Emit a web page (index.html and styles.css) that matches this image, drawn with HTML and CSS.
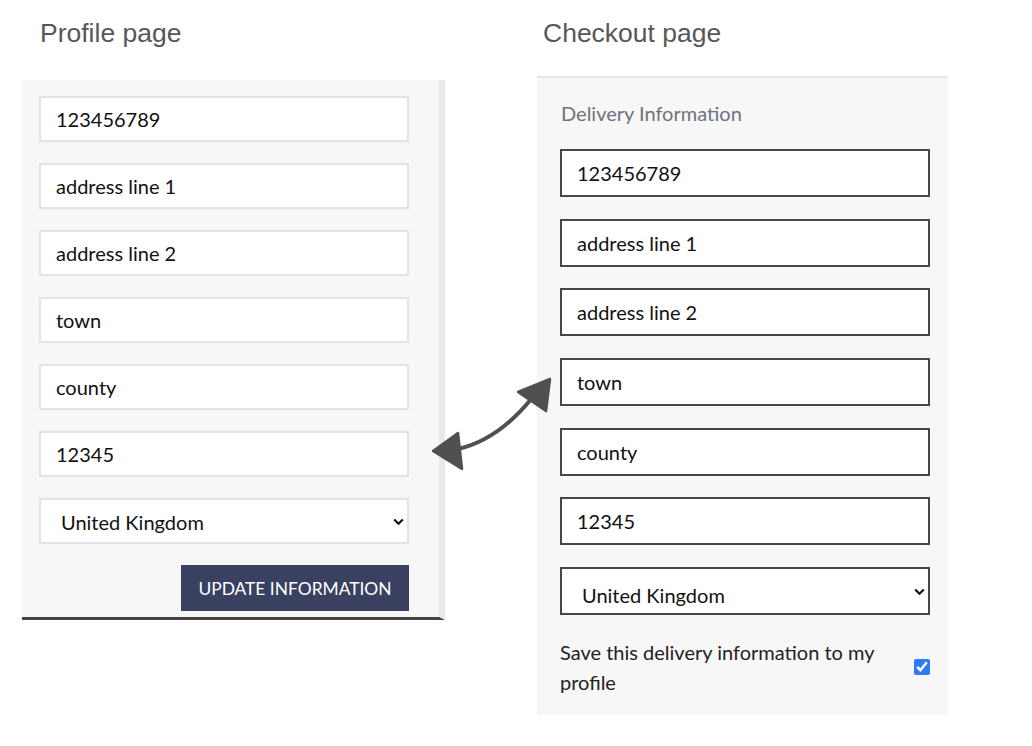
FILE: index.html
```html
<!DOCTYPE html>
<html lang="en">
<head>
<meta charset="utf-8">
<title>Profile vs Checkout</title>
<link rel="stylesheet" href="styles.css">
</head>
<body>
<div class="page">
  <section class="col col-left">
    <h2 class="title title-left">Profile page</h2>
    <div class="panel-left">
      <form class="fields fields-left">
        <input class="field-l" type="text" value="123456789">
        <input class="field-l" type="text" value="address line 1">
        <input class="field-l" type="text" value="address line 2">
        <input class="field-l" type="text" value="town">
        <input class="field-l" type="text" value="county">
        <input class="field-l" type="text" value="12345">
        <div class="select-wrap">
          <select class="field-l select-l"><option>United Kingdom</option></select>
          <svg class="chev" width="11" height="8" viewBox="0 0 11 8"><path d="M1.2 1.5 L5.5 5.8 L9.8 1.5" fill="none" stroke="#111" stroke-width="2.2"/></svg>
        </div>
        <button type="button" class="btn-update">UPDATE INFORMATION</button>
      </form>
    </div>
  </section>

  <section class="col col-right">
    <h2 class="title title-right">Checkout page</h2>
    <div class="panel-right">
      <div class="section-label">Delivery Information</div>
      <form class="fields fields-right">
        <input class="field-r" type="text" value="123456789">
        <input class="field-r" type="text" value="address line 1">
        <input class="field-r" type="text" value="address line 2">
        <input class="field-r" type="text" value="town">
        <input class="field-r" type="text" value="county">
        <input class="field-r" type="text" value="12345">
        <div class="select-wrap">
          <select class="field-r select-r"><option>United Kingdom</option></select>
          <svg class="chev chev-r" width="11" height="8" viewBox="0 0 11 8"><path d="M1.2 1.5 L5.5 5.8 L9.8 1.5" fill="none" stroke="#111" stroke-width="2.2"/></svg>
        </div>
        <label class="save-row">
          <span class="save-text">Save this delivery information to my profile</span>
          <input class="save-check" type="checkbox" checked>
        </label>
      </form>
    </div>
  </section>

  <svg class="arrow" width="150" height="120" viewBox="0 0 150 120">
    <path d="M38 89 Q78 80 112 38" fill="none" stroke="#505050" stroke-width="4" stroke-linecap="round"/>
    <path d="M13 91 L38 73 L42 109 Z" fill="#505050" stroke="#505050" stroke-width="2.5" stroke-linejoin="round"/>
    <path d="M130 19 L98 32 L126 51 Z" fill="#505050" stroke="#505050" stroke-width="2.5" stroke-linejoin="round"/>
  </svg>
</div>
</body>
</html>
```

FILE: styles.css
```css
* { box-sizing: border-box; }

html, body {
  margin: 0;
  padding: 0;
  background: #ffffff;
}

body {
  font-family: Lato, "Open Sans", "Liberation Sans", sans-serif;
  color: #111;
}

.page {
  position: relative;
  display: flex;
  align-items: flex-start;
  padding-left: 22px;
  width: 1032px;
  height: 746px;
}

.col-left { width: 423px; }
.col-right { width: 411px; margin-left: 92px; }

.title {
  margin: 0;
  font-family: "Liberation Sans", Arial, sans-serif;
  font-weight: normal;
  font-size: 26.5px;
  line-height: 30px;
  color: #575757;
  padding-top: 18px;
}

.title-left { padding-left: 18px; margin-bottom: 32px; }
.title-right { padding-left: 6px; margin-bottom: 28px; }

.panel-left {
  background: #f7f7f7;
  border-right: 6px solid #e9e9ec;
  border-bottom: 3px solid #444;
  padding: 16px 30px 6px 17px;
}

.fields {
  display: flex;
  flex-direction: column;
  margin: 0;
}

.fields-left { gap: 21px; }

.field-l {
  display: block;
  width: 100%;
  height: 46px;
  border: 2px solid #e0e3e7;
  background: #fff;
  font-family: Lato, sans-serif;
  font-size: 20px;
  color: #111;
  padding: 0 15px;
  outline: none;
  border-radius: 0;
}

.select-wrap { position: relative; }

.select-l,
.select-r {
  appearance: none;
  -webkit-appearance: none;
  cursor: pointer;
}

.select-l { padding: 2px 15px 0 20px; }

.chev {
  position: absolute;
  right: 5px;
  top: 20px;
  pointer-events: none;
}

.chev-r { right: 5px; top: 21px; }

.btn-update {
  align-self: flex-end;
  width: 228px;
  height: 46px;
  border: none;
  background: #3a4160;
  color: #fff;
  font-family: Lato, sans-serif;
  font-size: 17.4px;
  letter-spacing: 0;
  padding: 0;
  border-radius: 0;
}

.panel-right {
  background: #f7f7f7;
  border-top: 2px solid #e6e6e6;
  padding: 22px 18px 18px 23px;
}

.section-label {
  font-size: 20px;
  line-height: 27px;
  color: #6c757d;
  margin-bottom: 22px;
  padding-left: 1px;
}

.fields-right { gap: 21.7px; }

.field-r {
  display: block;
  width: 100%;
  height: 48px;
  border: 2px solid #474747;
  background: #fff;
  font-family: Lato, sans-serif;
  font-size: 20px;
  color: #111;
  padding: 0 15px;
  outline: none;
  border-radius: 0;
}

.select-r {
  padding: 8px 15px 0 20px;
  line-height: 24px;
}

.save-row {
  display: flex;
  align-items: center;
  gap: 14px;
  margin-top: 0;
  cursor: pointer;
}

.save-text {
  flex: 1;
  font-size: 20px;
  line-height: 30px;
  color: #222;
}

.save-check {
  width: 16px;
  height: 16px;
  margin: 0;
  accent-color: #2f7bf5;
}

.arrow {
  position: absolute;
  left: 420px;
  top: 360px;
}
```
